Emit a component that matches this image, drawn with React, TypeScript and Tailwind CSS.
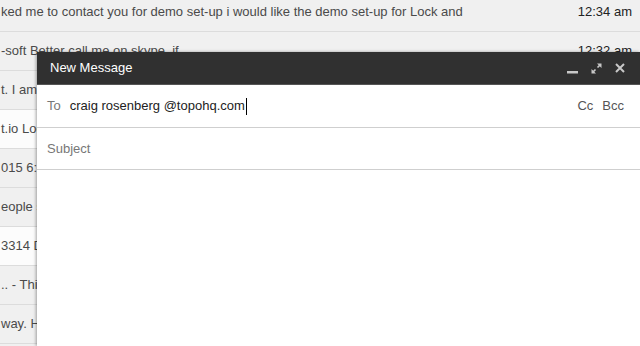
const rows = [
  { text: 'ked me to contact you for demo set-up i would like the demo set-up for Lock and', time: '12:34 am', unread: false },
  { text: '-soft Better call me on skype, if', time: '12:32 am', unread: false },
  { text: 't. I am writing to follow up on our conversation', time: '12:20 am', unread: false },
  { text: 't.io Looking forward to hearing from you', time: '12:11 am', unread: true },
  { text: '015 6:32 PM wrote: thanks for the update', time: '12:02 am', unread: false },
  { text: 'eople say about the new release', time: '11:58 pm', unread: false },
  { text: '3314 Details for your order', time: '11:40 pm', unread: true },
  { text: '.. - This message was sent to you', time: '11:22 pm', unread: false },
  { text: 'way. Hope you are doing well', time: '11:05 pm', unread: false },
  { text: '', time: '', unread: false },
];

function Minimize() {
  return (
    <svg width="11" height="11" viewBox="0 0 11 11" className="block">
      <rect x="0" y="8" width="11" height="2.5" fill="#c8c8c8" />
    </svg>
  );
}

function Expand() {
  return (
    <svg width="11" height="11" viewBox="0 0 11 11" className="block">
      <path d="M6 0.5H10.5V5Z M5 10.5H0.5V6Z" fill="#c8c8c8" />
      <path d="M9.5 1.5L6.5 4.5 M1.5 9.5L4.5 6.5" stroke="#c8c8c8" strokeWidth="1.6" />
    </svg>
  );
}

function Close() {
  return (
    <svg width="10" height="10" viewBox="0 0 10 10" className="block">
      <path d="M1 1L9 9 M9 1L1 9" stroke="#c8c8c8" strokeWidth="2" />
    </svg>
  );
}

export default function App() {
  return (
    <div className="relative w-[640px] h-[346px] overflow-hidden bg-white text-[13px]" style={{ fontFamily: '"Liberation Sans", Arial, sans-serif' }}>
      <div className="-mt-[7px]">
        {rows.map((r, i) => (
          <div
            key={i}
            className={`flex items-center h-[39px] border-b border-[#dcdcdc] pr-[8px] ${r.unread ? 'bg-[#fcfcfc]' : 'bg-[#f0f0f0]'}`}
          >
            <div className="flex-1 whitespace-nowrap overflow-hidden text-[#4a4a4a] pl-[1px]">{r.text}</div>
            <div className="text-[#222222] pl-4">{r.time}</div>
          </div>
        ))}
      </div>

      <div className="absolute left-[37px] top-[52px] right-0 bottom-0 flex flex-col bg-white shadow-[-1px_0_3px_rgba(0,0,0,0.35)]">
        <div className="flex items-center h-[33px] bg-[#303030] pl-[13px] pr-[15px] border-b border-[#555]">
          <div className="flex-1 text-white">New Message</div>
          <div className="flex items-center gap-[13px]">
            <Minimize />
            <Expand />
            <Close />
          </div>
        </div>
        <div className="flex items-center h-[43px] border-b border-[#cfcfcf] pl-[10px] pr-[16px]">
          <span className="text-[#777777]">To</span>
          <span className="ml-[9px] text-[#222222]">craig rosenberg @topohq.com</span>
          <span className="w-px h-[17px] bg-black ml-px" />
          <div className="flex-1" />
          <span className="text-[#555555]">Cc</span>
          <span className="ml-[9px] text-[#555555]">Bcc</span>
        </div>
        <div className="flex items-center h-[42px] border-b border-[#cfcfcf] pl-[10px]">
          <span className="text-[#777777]">Subject</span>
        </div>
        <div className="flex-1" />
      </div>
    </div>
  );
}
